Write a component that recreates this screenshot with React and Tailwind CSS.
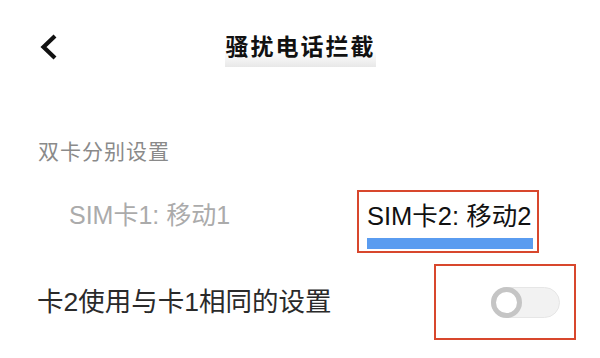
export default function App() {
  return (
    <div
      className="h-[358px] w-[600px] overflow-hidden bg-white pt-[34px] text-[#222]"
      style={{ fontFamily: '"Liberation Sans", "Noto Sans CJK SC", sans-serif' }}
    >
      {/* Header */}
      <div className="grid grid-cols-[1fr_auto_1fr] items-start">
        <div className="pl-[40px]">
          <svg width="18" height="26" viewBox="0 0 18 26" fill="none">
            <path d="M15 2 L3.5 13 L15 24" stroke="#111" strokeWidth="4.2" />
          </svg>
        </div>
        <span className="mt-[1px] bg-linear-to-b from-white from-50% to-[#e8e8e8] pb-[8px] pl-[1px] text-[23px] font-bold leading-[24px] tracking-[2px] text-[#111]">
          骚扰电话拦截
        </span>
        <div />
      </div>

      {/* Dual SIM */}
      <p className="mt-[74px] pl-[38px] text-[21px] leading-[22px] tracking-[1px] text-[#8a8a8a]">
        双卡分别设置
      </p>

      <div className="mt-[27px] flex items-start">
        <div className="mt-[12px] w-[357px] pl-[69px] text-[25px] leading-[26px] text-[#ababab]">
          SIM卡1: 移动1
        </div>
        <div className="w-[182px] border-2 border-[#d8472d] pb-[2px] pl-[8px] pt-[11px]">
          <div className="whitespace-nowrap text-[25.5px] leading-[26px] text-[#111]">SIM卡2: 移动2</div>
          <div className="mt-[9px] h-[11px] w-[166px] bg-[#5a9cf0]" />
        </div>
      </div>

      {/* Same settings toggle */}
      <div className="mt-[11px] flex items-center">
        <div className="w-[434px] pl-[37px] text-[26.5px] leading-[28px] text-[#2a2a2a]">
          卡2使用与卡1相同的设置
        </div>
        <div className="flex h-[76px] w-[142px] items-center border-2 border-[#d8472d] pl-[55px]">
          <div className="relative h-[31px] w-[69px] rounded-full border border-[#e6e6e6] bg-[#f2f2f2]">
            <div className="absolute left-[-1px] top-[-1px] h-[31px] w-[31px] rounded-full border-[5px] border-[#c5c5c5] bg-white" />
          </div>
        </div>
      </div>
    </div>
  );
}
